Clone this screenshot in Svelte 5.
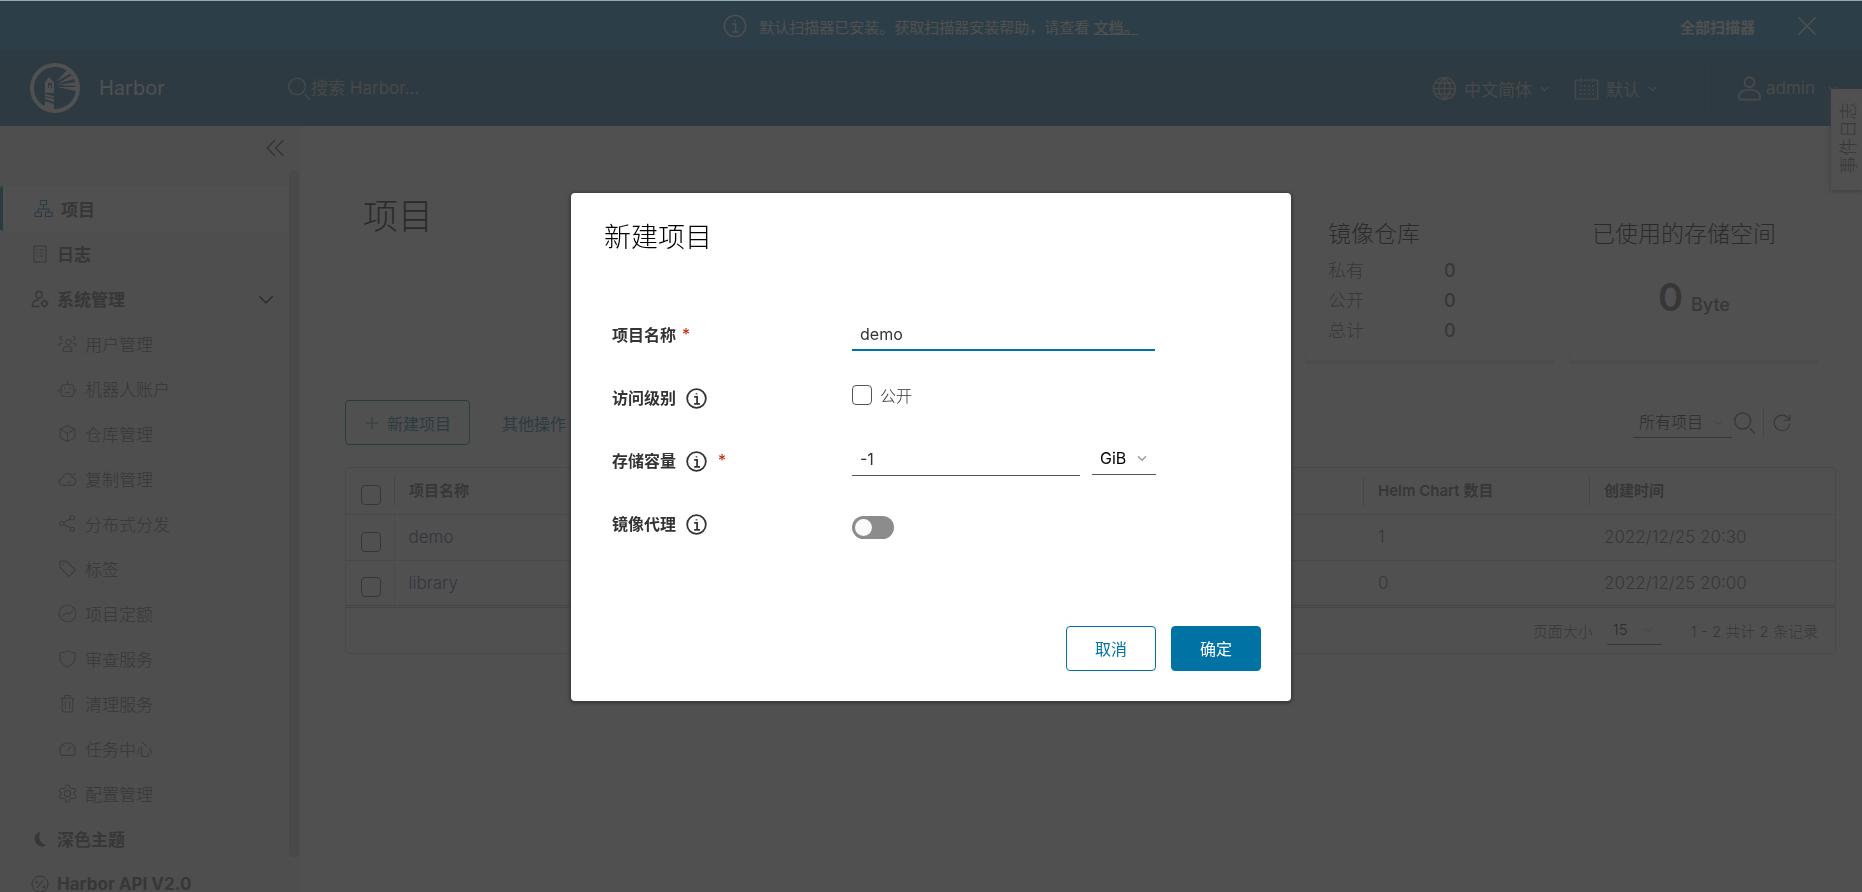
<script lang="ts">
  type NavItem = { icon: string; label: string };

  const icons: Record<string, string[]> = {
    search: ['M16 3a12 12 0 1 1 0 24a12 12 0 0 1 0-24z', 'M27 26l7 8'],
    info: ['M18 2a16 16 0 1 1 0 32a16 16 0 0 1 0-32z', 'M14 15h5v12M14 27h10', 'M18 9v2'],
    close: ['M5 5l26 26M31 5L5 31'],
    globe: [
      'M18 2a16 16 0 1 1 0 32a16 16 0 0 1 0-32z',
      'M18 2v32M2 18h32M5 10h26M5 26h26',
      'M18 2c-11 10-11 22 0 32M18 2c11 10 11 22 0 32'
    ],
    calendar: [
      'M8 6H2v27h32V6h-6M13 6h10',
      'M10 3v6M26 3v6',
      'M8 14h3M14 14h3M20 14h3M26 14h3M8 20h3M14 20h3M20 20h3M26 20h3M8 26h3M14 26h3M20 26h3M26 26h3'
    ],
    user: ['M18 2a7 7 0 1 1 0 14a7 7 0 0 1 0-14z', 'M3 32v-4c2-11 28-11 30 0v4q0 2-2 2H5q-2 0-2-2z'],
    caret: ['M6 13l12 12l12-12'],
    collapse: ['M18 4L4 18l14 14M33 4L19 18l14 14'],
    projects: ['M12 3h12v8H12zM2 25h12v8H2zM22 25h12v8H22z', 'M18 11v7M8 25v-6h20v6'],
    logs: ['M6 2h24v32H6z', 'M11 10h3M17 10h8M11 16h3M17 16h8M11 22h3M17 22h8'],
    admin: ['M16 3a6 6 0 1 1 0 13a6 6 0 0 1 0-13z', 'M17 33H3v-4c1-6 6-9 13-9', 'M27 22a5 5 0 1 1 0 10a5 5 0 0 1 0-10zM27 19v3M27 32v3M19 27h3M32 27h3'],
    users: [
      'M18 11a5 5 0 1 1 0 9a5 5 0 0 1 0-9z',
      'M10 33v-5c1-6 15-6 16 0v5z',
      'M8 4a4 4 0 1 0 0 8M28 4a4 4 0 1 1 0 8M2 23c0-4 2-6 6-6M34 23c0-4-2-6-6-6'
    ],
    robot: ['M12 11h12q6 0 6 6v9q0 7-7 7H13q-7 0-7-7v-9q0-6 6-6z', 'M18 3v8M2 19v6M34 19v6M12 18h3M21 18h3M13 26h10'],
    box: ['M18 3l14 7v16l-14 7L4 26V10z', 'M4 10l14 8l14-8M18 18v15'],
    cloud: ['M27 16c6 1 8 5 6 10q-2 5-7 5H9c-9-1-9-12 0-14c2-11 16-11 18-1', 'M18 25h6M28 12l5-4'],
    share: ['M27 3a4 4 0 1 1 0 8a4 4 0 0 1 0-8zM7 14a4 4 0 1 1 0 8a4 4 0 0 1 0-8zM27 25a4 4 0 1 1 0 8a4 4 0 0 1 0-8z', 'M11 16l13-7M11 20l13 7'],
    tag: ['M4 4h12l17 17l-12 12L4 16z', 'M10 9v3'],
    quota: ['M18 2a16 16 0 1 1 0 32a16 16 0 0 1 0-32z', 'M8 24l8-7l5 2l7-7'],
    shield: ['M18 3c5 3 9 4 14 4v11c0 7-6 12-14 16C10 30 4 25 4 18V7c5 0 9-1 14-4z'],
    trash: ['M5 8h26M8 8v22q0 4 4 4h12q4 0 4-4V8M13 8V3h10v5', 'M14 14v14M22 14v14'],
    dashboard: ['M6 31a15 15 0 1 1 24 0z', 'M17 23l8-9M4 21h3M29 21h3M10 12l2 2'],
    gear: [
      'M15 2h6l1 5l4 2l5-1l3 5l-4 4v2l4 4l-3 5l-5-1l-4 2l-1 5h-6l-1-5l-4-2l-5 1l-3-5l4-4v-2l-4-4l3-5l5 1l4-2z',
      'M18 12a6 6 0 1 1 0 12a6 6 0 0 1 0-12z'
    ],
    api: ['M18 2a16 16 0 1 1 0 32a16 16 0 0 1 0-32z', 'M9 12l5 5M14 12l-5 5M12 26l12-16M22 22l5 5M27 21v5'],
    plus: ['M18 4v28M4 18h28'],
    refresh: ['M32 19a14 14 0 1 1-4-11l4 4', 'M32 3v10H22']
  };

  const adminItems: NavItem[] = [
    { icon: 'users', label: '用户管理' },
    { icon: 'robot', label: '机器人账户' },
    { icon: 'box', label: '仓库管理' },
    { icon: 'cloud', label: '复制管理' },
    { icon: 'share', label: '分布式分发' },
    { icon: 'tag', label: '标签' },
    { icon: 'quota', label: '项目定额' },
    { icon: 'shield', label: '审查服务' },
    { icon: 'trash', label: '清理服务' },
    { icon: 'dashboard', label: '任务中心' },
    { icon: 'gear', label: '配置管理' }
  ];

  const repoCounts = [
    { label: '私有', count: 0 },
    { label: '公开', count: 0 },
    { label: '总计', count: 0 }
  ];

  const projects = [
    { name: 'demo', charts: 1, created: '2022/12/25 20:30' },
    { name: 'library', charts: 0, created: '2022/12/25 20:00' }
  ];

  let projectName = $state('demo');
  let storageLimit = $state('-1');
  let isPublic = $state(false);
  let proxyCache = $state(false);
  let modalOpen = $state(true);
</script>

{#snippet icon(name: string, size: number, stroke = 2)}
  <svg class="icon" width={size} height={size} viewBox="0 0 36 36" stroke-width={stroke} aria-hidden="true">
    {#each icons[name] as d}
      <path {d} />
    {/each}
  </svg>
{/snippet}

<div class="app">
  <div class="banner">
    <div class="banner-message">
      {@render icon('info', 24)}
      <span>默认扫描器已安装。获取扫描器安装帮助，请查看 <a href="#docs">文档。</a></span>
    </div>
    <a class="banner-link" href="#scanners">全部扫描器</a>
    <button type="button" class="plain" aria-label="关闭">{@render icon('close', 24)}</button>
  </div>

  <header>
    <a class="brand" href="#home">
      <svg width="50" height="50" viewBox="0 0 50 50" aria-hidden="true">
        <circle cx="25" cy="25" r="23" fill="none" stroke="currentColor" stroke-width="4" />
        <path fill="currentColor" d="M15 19l4-5l5 5v11h-9z" />
        <path fill="currentColor" d="M15 31l9 2v2l-9-2zM15 34l9 2v3l-9-3zM15 38l9 3v7h-10z" />
        <path class="hole" d="M18 20h4v5h-1v-3h-2v3h-1z" />
        <path fill="currentColor" d="M26 19L37 7l4 3zM27 21l15-9l2 4zM27 22l19-3v4zM27 24l19 0v4z" />
      </svg>
      <span>Harbor</span>
    </a>
    <label class="search">
      {@render icon('search', 25)}
      <input type="text" placeholder="搜索 Harbor..." />
    </label>
    <div class="header-actions">
      <button type="button" class="plain">{@render icon('globe', 25)}中文简体{@render icon('caret', 11, 4)}</button>
      <button type="button" class="plain">{@render icon('calendar', 25)}默认{@render icon('caret', 11, 4)}</button>
      <button type="button" class="plain account">{@render icon('user', 25, 3)}admin{@render icon('caret', 11, 4)}</button>
    </div>
  </header>

  <div class="content">
    <nav>
      <button type="button" class="plain collapse" aria-label="收起">{@render icon('collapse', 20)}</button>
      <a class="nav-item active" href="#projects">{@render icon('projects', 19)}项目</a>
      <a class="nav-item" href="#logs">{@render icon('logs', 18)}日志</a>
      <button type="button" class="plain nav-item group">
        {@render icon('admin', 18, 3)}系统管理
        {@render icon('caret', 20, 3)}
      </button>
      {#each adminItems as item}
        <a class="nav-item sub" href="#{item.icon}">{@render icon(item.icon, 19)}{item.label}</a>
      {/each}
      <button type="button" class="plain nav-item">
        <svg width="18" height="18" viewBox="0 0 36 36" aria-hidden="true">
          <path fill="currentColor" d="M20 3a15 15 0 1 0 11 27C17 28 12 13 20 3z" />
        </svg>深色主题
      </button>
      <a class="nav-item" href="#api">{@render icon('api', 18)}Harbor API V2.0</a>
      <div class="nav-scroll"></div>
    </nav>

    <main>
      <div class="summary">
        <h1>项目</h1>
        <section class="card">
          <h2>镜像仓库</h2>
          <dl>
            {#each repoCounts as row}
              <dt>{row.label}</dt>
              <dd>{row.count}</dd>
            {/each}
          </dl>
        </section>
        <section class="card">
          <h2>已使用的存储空间</h2>
          <p class="storage"><strong>0</strong> Byte</p>
        </section>
      </div>

      <div class="toolbar">
        <button type="button" class="btn">{@render icon('plus', 16)}新建项目</button>
        <button type="button" class="btn link">其他操作</button>
        <div class="filters">
          <span class="select">
            <select aria-label="项目类型"><option>所有项目</option></select>
            {@render icon('caret', 11, 3)}
          </span>
          <button type="button" class="plain" aria-label="搜索">{@render icon('search', 24)}</button>
          <span class="rule"></span>
          <button type="button" class="plain" aria-label="刷新">{@render icon('refresh', 20)}</button>
        </div>
      </div>

      <div class="datagrid">
        <table>
          <thead>
            <tr>
              <th class="check"><input type="checkbox" aria-label="全选" /></th>
              <th><span>项目名称</span></th>
              <th class="charts"><span>Helm Chart 数目</span></th>
              <th class="created"><span>创建时间</span></th>
            </tr>
          </thead>
          <tbody>
            {#each projects as project}
              <tr>
                <td><input type="checkbox" aria-label={project.name} /></td>
                <td class="name"><a href="#{project.name}">{project.name}</a></td>
                <td>{project.charts}</td>
                <td>{project.created}</td>
              </tr>
            {/each}
          </tbody>
        </table>
        <div class="pagination">
          <label for="page-size">页面大小</label>
          <span class="select small">
            <select id="page-size"><option>15</option></select>
            {@render icon('caret', 11, 3)}
          </span>
          <span class="total">1 - 2 共计 2 条记录</span>
        </div>
      </div>
    </main>
  </div>

  <button type="button" class="event-tab"><span>事件日志</span></button>
</div>

{#if modalOpen}
  <div class="backdrop">
    <div class="modal" role="dialog" aria-modal="true" aria-labelledby="modal-title">
      <h3 id="modal-title">新建项目</h3>
      <form>
        <div class="field">
          <label for="project-name">项目名称 <em>*</em></label>
          <input id="project-name" class="text focused" type="text" bind:value={projectName} />
        </div>
        <div class="field">
          <span class="label">访问级别 {@render icon('info', 21, 3)}</span>
          <label class="option"><input type="checkbox" bind:checked={isPublic} />公开</label>
        </div>
        <div class="field">
          <label for="storage">存储容量 {@render icon('info', 21, 3)} <em class="far">*</em></label>
          <div class="quota">
            <input id="storage" class="text" type="text" bind:value={storageLimit} />
            <span class="select unit">
              <select aria-label="单位"><option>GiB</option></select>
              {@render icon('caret', 12, 4)}
            </span>
          </div>
        </div>
        <div class="field">
          <label for="proxy">镜像代理 {@render icon('info', 21, 3)}</label>
          <input id="proxy" class="toggle" type="checkbox" bind:checked={proxyCache} />
        </div>
      </form>
      <div class="modal-footer">
        <button type="button" class="btn" onclick={() => (modalOpen = false)}>取消</button>
        <button type="button" class="btn primary">确定</button>
      </div>
    </div>
  </div>
{/if}

<style>
  :global(body) {
    margin: 0;
    font-family: Inter, 'Noto Sans CJK SC', sans-serif;
    font-size: 16px;
    color: #565656;
    background: #fafafa;
  }

  .app,
  .app *,
  .backdrop,
  .backdrop * {
    box-sizing: border-box;
  }

  .app {
    position: relative;
    display: flex;
    flex-direction: column;
    height: 100vh;
    overflow: hidden;
  }

  a {
    color: inherit;
    text-decoration: none;
  }

  button,
  input,
  select {
    font: inherit;
    color: inherit;
  }

  .icon {
    flex: none;
    fill: none;
    stroke: currentColor;
  }

  .plain {
    display: flex;
    align-items: center;
    padding: 0;
    border: none;
    background: none;
    cursor: pointer;
  }

  /* Banner */
  .banner {
    display: flex;
    align-items: center;
    flex: none;
    height: 50px;
    padding: 2px 43px 0 0;
    color: #fafafa;
    background: #1288c8;
    font-size: 15px;
  }

  .banner-message {
    flex: 1;
    display: flex;
    align-items: center;
    justify-content: center;
    gap: 12px;
    padding-left: 182px;
  }

  .banner-message a {
    font-weight: 500;
    text-decoration: underline;
  }

  .banner-link {
    margin-right: 40px;
    font-weight: 700;
  }

  /* Header */
  header {
    display: flex;
    align-items: center;
    flex: none;
    height: 76px;
    padding-right: 24px;
    color: #c8c8c8;
    background: #176d9c;
    font-size: 17px;
  }

  .brand {
    display: flex;
    align-items: center;
    gap: 19px;
    width: 251px;
    height: 50px;
    padding-left: 30px;
    border-right: 1px solid #2a5a78;
    color: #fafafa;
    font-size: 20px;
  }

  .hole {
    fill: #176d9c;
  }

  .search {
    flex: 1;
    display: flex;
    align-items: center;
    padding-left: 35px;
  }

  .search input {
    width: 240px;
    padding: 0;
    border: none;
    outline: none;
    background: none;
  }

  .search input::placeholder {
    color: #c8c8c8;
  }

  .header-actions {
    display: flex;
    align-items: center;
    gap: 24px;
  }

  .header-actions .plain {
    gap: 7px;
  }

  .header-actions .account {
    gap: 4px;
    height: 50px;
    margin-left: 22px;
    padding-left: 32px;
    border-left: 1px solid #2a5a78;
  }

  .account .icon:last-child {
    margin-left: 8px;
  }

  /* Side navigation */
  .content {
    flex: 1;
    display: flex;
    min-height: 0;
  }

  nav {
    position: relative;
    flex: none;
    width: 301px;
    overflow: hidden;
    padding-right: 12px;
    border-right: 1px solid #f4f4f4;
    background: #eee;
    font-size: 17px;
  }

  .collapse {
    width: 100%;
    height: 60px;
    padding: 0 3px 16px 0;
    justify-content: flex-end;
    color: #222;
  }

  .nav-item {
    display: flex;
    align-items: center;
    gap: 8px;
    width: 100%;
    height: 45px;
    padding: 0 12px 0 31px;
    font-weight: 700;
  }

  .nav-item.active {
    border-left: 3px solid #0072a3;
    border-radius: 3px 0 0 3px;
    background: #fff;
  }

  .active .icon {
    color: #0072a3;
  }

  .nav-item.sub {
    padding-left: 58px;
    font-weight: 300;
  }

  .sub .icon {
    color: #777;
  }

  .group .icon:last-child {
    margin-left: auto;
    color: #222;
  }

  /* Thumb lies over the list edge */
  .nav-scroll {
    position: absolute;
    top: 45px;
    right: 1px;
    bottom: 35px;
    width: 10px;
    border: 1px solid #c8c8c8;
    border-radius: 4px;
    background: #d8d8d8;
  }

  /* Main area */
  main {
    flex: 1;
    min-width: 0;
    padding: 79px 26px 0 44px;
  }

  .summary {
    display: flex;
    gap: 14px;
    padding-right: 17px;
  }

  h1,
  h2,
  h3 {
    margin: 0;
    color: #000;
    font-weight: 300;
  }

  h1 {
    flex: 1;
    margin-top: -14px;
    padding-left: 18px;
    font-size: 35px;
    line-height: 50px;
  }

  .card {
    width: 250px;
    height: 156px;
    padding: 13px 22px;
    border: 1px solid #eee;
    border-radius: 4px;
    background: #fff;
    box-shadow: 0 3px 0 #e0e0e0;
  }

  h2 {
    font-size: 23px;
    line-height: 30px;
    white-space: nowrap;
  }

  dl {
    display: grid;
    grid-template-columns: 116px 1fr;
    margin: 7px 0 0;
    font-weight: 300;
    font-size: 18px;
    line-height: 30px;
  }

  dd {
    margin: 0;
    font-weight: 500;
  }

  .storage {
    margin: 23px 0 0;
    text-align: center;
    font-size: 18px;
    font-weight: 500;
    line-height: 50px;
  }

  .storage strong {
    margin-right: 3px;
    font-size: 38px;
    font-weight: 600;
  }

  /* Buttons */
  .btn {
    display: flex;
    align-items: center;
    justify-content: center;
    gap: 7px;
    min-width: 90px;
    height: 45px;
    padding: 0 18px;
    border: 1px solid #0072a3;
    border-radius: 4px;
    background: none;
    color: #0072a3;
    cursor: pointer;
  }

  .btn.link {
    border-color: transparent;
  }

  .btn.primary {
    background: #0072a3;
    color: #fff;
  }

  .toolbar {
    display: flex;
    align-items: center;
    gap: 13px;
    margin-top: 39px;
    padding-right: 44px;
  }

  .filters {
    display: flex;
    align-items: center;
    margin-left: auto;
  }

  .rule {
    width: 1px;
    height: 30px;
    margin: 0 8px 0 7px;
    background: #bbb;
  }

  .select {
    display: flex;
    align-items: center;
    width: 99px;
    height: 30px;
    padding: 0 8px 0 6px;
    border-bottom: 1px solid #565656;
    color: #000;
    font-weight: 300;
  }

  .select select {
    flex: 1;
    min-width: 0;
    padding: 0;
    border: none;
    outline: none;
    appearance: none;
    background: none;
  }

  .select .icon {
    color: #999;
  }

  /* Table */
  .datagrid {
    margin-top: 22px;
    border: 1px solid #ccc;
    border-radius: 4px;
    background: #fff;
  }

  table {
    width: 100%;
    border-collapse: collapse;
    table-layout: fixed;
    text-align: left;
  }

  th,
  td {
    height: 46px;
    padding: 0 0 0 15px;
    border-bottom: 1px solid #ccc;
    font-weight: 300;
  }

  td {
    font-size: 17px;
  }

  th {
    padding-left: 0;
    font-size: 15px;
    font-weight: 600;
  }

  th span {
    display: block;
    padding-left: 14px;
    border-left: 1px solid #bbb;
    line-height: 30px;
  }

  tbody tr:last-child td {
    border-bottom: 3px double #bbb;
  }

  th.check {
    width: 48px;
    padding-left: 15px;
  }

  .charts {
    width: 226px;
  }

  .created {
    width: 246px;
  }

  .name {
    padding-left: 14px;
    border-left: 1px solid #ddd;
    color: #483d8b;
  }

  input[type='checkbox']:not(.toggle) {
    display: block;
    width: 20px;
    height: 20px;
    margin: 9px 0 0;
    border: 1px solid #565656;
    border-radius: 4px;
    appearance: none;
  }

  input[type='checkbox']:not(.toggle):checked {
    background: #0072a3;
  }

  .pagination {
    display: flex;
    align-items: center;
    justify-content: flex-end;
    height: 45px;
    padding-right: 17px;
    font-size: 15px;
    font-weight: 300;
  }

  .select.small {
    width: 55px;
    margin: 0 29px 0 14px;
  }

  /* Tab over the right edge of the window */
  .event-tab {
    position: absolute;
    top: 89px;
    right: 0;
    width: 31px;
    height: 101px;
    padding: 0;
    border: none;
    background: #fff;
    box-shadow: 0 1px 4px #777;
    font-size: 18px;
    font-weight: 300;
  }

  .event-tab span {
    writing-mode: vertical-rl;
    text-orientation: sideways;
    transform: rotate(180deg);
  }

  /* Dialog */
  .backdrop {
    position: fixed;
    inset: 0;
    display: flex;
    align-items: center;
    justify-content: center;
    border-top: 1px solid #8fa9b5;
    background: rgba(49, 49, 49, 0.85);
  }

  .modal {
    width: 720px;
    padding: 30px;
    border-radius: 4px;
    background: #fff;
    box-shadow: 0 1px 3px 2px rgba(0, 0, 0, 0.25);
  }

  h3 {
    padding-left: 3px;
    font-size: 27px;
    line-height: 30px;
  }

  form {
    margin: 50px 0 71px;
    padding-left: 11px;
  }

  .field {
    display: flex;
    align-items: center;
    height: 63px;
    color: #333;
  }

  .field > label:first-child,
  .label {
    display: flex;
    align-items: center;
    width: 240px;
    font-weight: 600;
  }

  .field > label .icon,
  .label .icon {
    margin: 3px 0 0 10px;
  }

  em {
    margin-left: 6px;
    color: #c21d00;
    font-style: normal;
    font-weight: 400;
  }

  em.far {
    margin-left: 11px;
  }

  .text {
    width: 303px;
    height: 34px;
    padding: 2px 8px 0;
    border: none;
    border-bottom: 1px solid #565656;
    outline: none;
    background: none;
  }

  .text.focused {
    border-bottom: 2px solid #0072a3;
  }

  .field .option {
    display: flex;
    align-items: center;
    gap: 8px;
    padding-bottom: 5px;
    font-weight: 300;
  }

  .field .option input {
    margin: 0;
  }

  .quota {
    display: flex;
    gap: 12px;
    padding-bottom: 2px;
  }

  .quota .text {
    width: 228px;
    padding-top: 0;
  }

  .select.unit {
    width: 64px;
    height: 33px;
    padding-left: 8px;
    font-weight: 400;
  }

  .toggle {
    width: 42px;
    height: 23px;
    margin: 8px 0 0;
    padding: 3px;
    border-radius: 12px;
    background: #8c8c8c;
    appearance: none;
  }

  .toggle::before {
    content: '';
    display: block;
    width: 17px;
    height: 17px;
    border-radius: 50%;
    background: #fafafa;
  }

  .toggle:checked {
    background: #5aa220;
  }

  .toggle:checked::before {
    margin-left: auto;
  }

  .modal-footer {
    display: flex;
    justify-content: flex-end;
    gap: 15px;
  }
</style>
